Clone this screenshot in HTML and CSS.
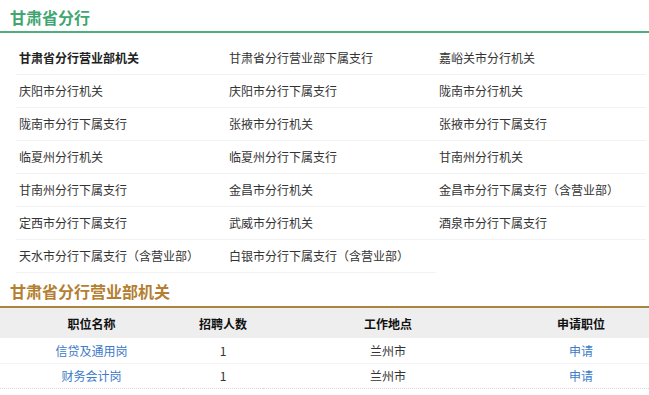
FILE: index.html
```html
<!DOCTYPE html>
<html lang="zh-CN">
<head>
    <meta charset="UTF-8">
    <meta name="viewport" content="width=device-width, initial-scale=1.0">
    <title>甘肃省分行</title>
    <link rel="stylesheet" href="styles.css">
</head>
<body>
    <!-- Branch list -->
    <div class="section">
        <div class="title green">甘肃省分行</div>
        <ul class="org-list">
            <li class="active"><a href="#">甘肃省分行营业部机关</a></li>
            <li><a href="#">甘肃省分行营业部下属支行</a></li>
            <li><a href="#">嘉峪关市分行机关</a></li>
            <li><a href="#">庆阳市分行机关</a></li>
            <li><a href="#">庆阳市分行下属支行</a></li>
            <li><a href="#">陇南市分行机关</a></li>
            <li><a href="#">陇南市分行下属支行</a></li>
            <li><a href="#">张掖市分行机关</a></li>
            <li><a href="#">张掖市分行下属支行</a></li>
            <li><a href="#">临夏州分行机关</a></li>
            <li><a href="#">临夏州分行下属支行</a></li>
            <li><a href="#">甘南州分行机关</a></li>
            <li><a href="#">甘南州分行下属支行</a></li>
            <li><a href="#">金昌市分行机关</a></li>
            <li><a href="#">金昌市分行下属支行（含营业部）</a></li>
            <li><a href="#">定西市分行下属支行</a></li>
            <li><a href="#">武威市分行机关</a></li>
            <li><a href="#">酒泉市分行下属支行</a></li>
            <li><a href="#">天水市分行下属支行（含营业部）</a></li>
            <li><a href="#">白银市分行下属支行（含营业部）</a></li>
        </ul>
    </div>

    <!-- Job table -->
    <div class="section">
        <div class="title brown">甘肃省分行营业部机关</div>
        <table class="job-table">
            <thead>
                <tr>
                    <th class="c1">职位名称</th>
                    <th class="c2">招聘人数</th>
                    <th class="c3">工作地点</th>
                    <th>申请职位</th>
                </tr>
            </thead>
            <tbody>
                <tr>
                    <td><a href="#">信贷及通用岗</a></td>
                    <td>1</td>
                    <td>兰州市</td>
                    <td><a href="#">申请</a></td>
                </tr>
                <tr>
                    <td><a href="#">财务会计岗</a></td>
                    <td>1</td>
                    <td>兰州市</td>
                    <td><a href="#">申请</a></td>
                </tr>
            </tbody>
        </table>
    </div>
</body>
</html>
```

FILE: styles.css
```css
* {
    margin: 0;
    padding: 0;
    box-sizing: border-box;
}

body {
    width: 649px;
    background: #fff;
    color: #333;
    font-family: "Microsoft YaHei", "Noto Sans CJK SC", sans-serif;
    font-size: 12px;
}

a {
    text-decoration: none;
    color: inherit;
}

/* Section titles */
.title {
    font-size: 16px;
    font-weight: bold;
    padding-left: 10px;
}

.title.green {
    color: #3fa672;
    padding-top: 3px;
    line-height: 28px;
    border-bottom: 2px solid #4caf7e;
}

.title.brown {
    color: #b47f32;
    padding-top: 3px;
    line-height: 30px;
    border-bottom: 2px solid #a8843f;
}

/* Branch list, three columns */
.org-list {
    list-style: none;
    display: grid;
    grid-template-columns: repeat(3, 210px);
    padding: 9px 0 0 16px;
}

.org-list li {
    height: 33px;
    line-height: 32px;
    padding: 0 3px;
    border-bottom: 1px solid #f2f2f2;
    white-space: nowrap;
}

.org-list li a {
    color: #333;
}

.org-list li.active a {
    color: #222;
    font-weight: bold;
}

/* Job table */
.job-table {
    width: 100%;
    border-collapse: collapse;
    text-align: center;
}

.job-table th {
    height: 30px;
    background: #eeeeee;
    color: #111;
    font-weight: bold;
}

.job-table .c1 {
    width: 183px;
}

.job-table .c2 {
    width: 80px;
}

.job-table .c3 {
    width: 250px;
}

.job-table td {
    height: 25px;
    color: #333;
    border-bottom: 1px solid #f3f3f3;
}

.job-table tbody tr:last-child td {
    border-bottom: 1px dotted #d8d8d8;
}

.job-table td a {
    color: #3c7bc8;
}
```
